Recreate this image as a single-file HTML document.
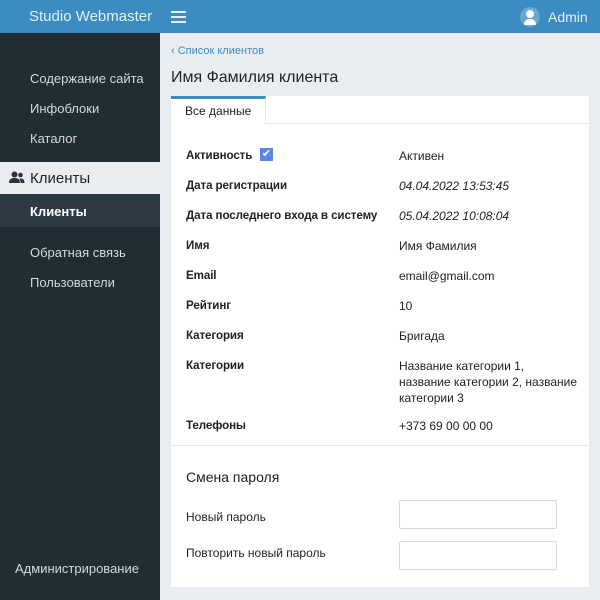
<!DOCTYPE html>
<html><head><meta charset="utf-8"><style>
*{margin:0;padding:0;box-sizing:border-box}
body{width:600px;height:600px;overflow:hidden;background:#e9edf2;font-family:"Liberation Sans","Noto Sans CJK SC",sans-serif;position:relative;color:#222}
.a{position:absolute;white-space:nowrap}
.top{left:0;top:0;width:600px;height:33px;background:#3b8cc0}
.side{left:0;top:33px;width:160px;height:567px;background:#222c33}
.sl{color:#d2d8dc;font-size:13px}
.lbl{font-size:11.6px;font-weight:bold;color:#222;left:186px;letter-spacing:-0.1px}
.val{font-size:12px;color:#222;left:399px}
.inp{left:399px;width:158px;height:29px;border:1px solid #d9d9d9;background:#fff;border-radius:2px}
</style></head><body>
<div class="a top"></div>
<div class="a" style="left:29px;top:8px;color:#e6f0f7;font-size:15px">Studio Webmaster</div>
<div class="a" style="left:171px;top:11px;width:15px;height:2px;background:#e6f0f7;box-shadow:0 5px 0 #e6f0f7,0 10px 0 #e6f0f7"></div>
<div class="a" style="left:520px;top:7px;width:20px;height:20px;border-radius:50%;background:#6aa8d2;overflow:hidden">
<div class="a" style="left:6px;top:3px;width:8px;height:8px;border-radius:50%;background:#fff"></div>
<div class="a" style="left:4px;top:12px;width:12px;height:6px;border-radius:5px 5px 1px 1px;background:#fff"></div></div>
<div class="a" style="left:548px;top:9px;color:#e6f0f7;font-size:14px">Admin</div>
<div class="a side"></div>
<div class="a sl" style="left:30px;top:71px">Содержание сайта</div>
<div class="a sl" style="left:30px;top:101px">Инфоблоки</div>
<div class="a sl" style="left:30px;top:131px">Каталог</div>
<div class="a" style="left:0;top:162px;width:160px;height:32px;background:#e9edf2"></div>
<svg class="a" style="left:9px;top:171px" width="16" height="13" viewBox="0 0 16 13"><circle cx="5.5" cy="3.5" r="3" fill="#2b343a"/><path d="M0 12c0-4 2.5-5 5.5-5s5.5 1 5.5 5z" fill="#2b343a"/><circle cx="11.5" cy="4" r="2.3" fill="#2b343a"/><path d="M11.5 7.5c2.5 0 4 1 4 4.5h-3.8c0-2-.6-3.3-1.6-4.3z" fill="#2b343a"/></svg>
<div class="a" style="left:30px;top:170px;font-size:15px;color:#1d2428">Клиенты</div>
<div class="a" style="left:0;top:194px;width:160px;height:33px;background:#2d3a42"></div>
<div class="a" style="left:30px;top:204px;font-size:13px;font-weight:bold;color:#fff">Клиенты</div>
<div class="a sl" style="left:30px;top:245px">Обратная связь</div>
<div class="a sl" style="left:30px;top:275px">Пользователи</div>
<div class="a sl" style="left:15px;top:561px">Администрирование</div>
<div class="a" style="left:171px;top:45px;font-size:11px;color:#3b8cc0">‹ Список клиентов</div>
<div class="a" style="left:171px;top:69px;font-size:16px;color:#1d2428">Имя Фамилия клиента</div>
<div class="a" style="left:171px;top:96px;width:418px;height:491px;background:#fff"></div>
<div class="a" style="left:171px;top:123px;width:418px;height:1px;background:#e6e9ec"></div>
<div class="a" style="left:171px;top:96px;width:95px;height:28px;background:#fff;border-top:3px solid #3b8cc0;border-right:1px solid #e6e9ec"></div>
<div class="a" style="left:185px;top:104px;font-size:12px">Все данные</div>
<div class="a lbl" style="top:149px">Активность</div>
<div class="a" style="left:260px;top:148px;width:13px;height:13px;background:#5b86e5;color:#fff;font-size:11px;line-height:13px;text-align:center">✔</div>
<div class="a val" style="top:149px">Активен</div>
<div class="a lbl" style="top:179px">Дата регистрации</div>
<div class="a val" style="top:179px;font-style:italic">04.04.2022 13:53:45</div>
<div class="a lbl" style="top:209px">Дата последнего входа в систему</div>
<div class="a val" style="top:209px;font-style:italic">05.04.2022 10:08:04</div>
<div class="a lbl" style="top:239px">Имя</div>
<div class="a val" style="top:239px">Имя Фамилия</div>
<div class="a lbl" style="top:269px">Email</div>
<div class="a val" style="top:269px">email@gmail.com</div>
<div class="a lbl" style="top:299px">Рейтинг</div>
<div class="a val" style="top:299px">10</div>
<div class="a lbl" style="top:329px">Категория</div>
<div class="a val" style="top:329px">Бригада</div>
<div class="a lbl" style="top:359px">Категории</div>
<div class="a val" style="top:358px;line-height:16px">Название категории 1,<br>название категории 2, название<br>категории 3</div>
<div class="a lbl" style="top:419px">Телефоны</div>
<div class="a val" style="top:419px">+373 69 00 00 00</div>
<div class="a" style="left:171px;top:445px;width:418px;height:1px;background:#e6e9ec"></div>
<div class="a" style="left:186px;top:469px;font-size:14px">Смена пароля</div>
<div class="a" style="left:186px;top:510px;font-size:12px">Новый пароль</div>
<div class="a inp" style="top:500px"></div>
<div class="a" style="left:186px;top:546px;font-size:12px">Повторить новый пароль</div>
<div class="a inp" style="top:541px"></div>
</body></html>
